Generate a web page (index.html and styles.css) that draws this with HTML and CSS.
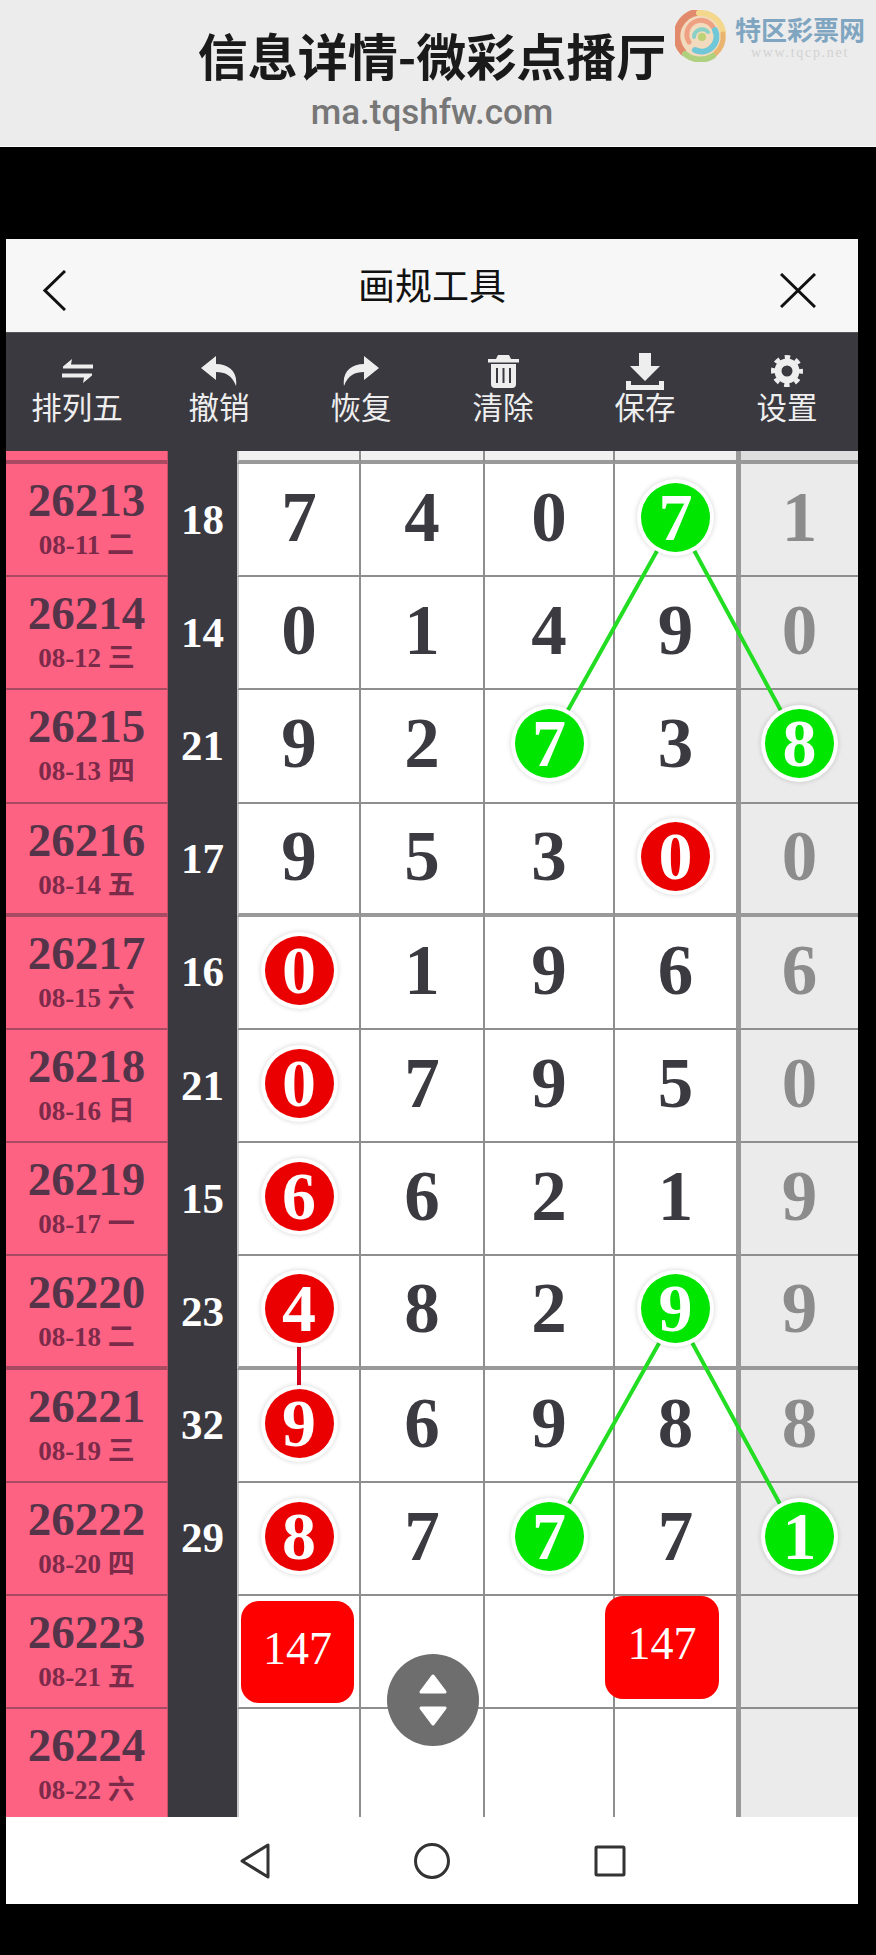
FILE: index.html
```html
<!DOCTYPE html>
<html lang="zh">
<head>
<meta charset="UTF-8">
<meta name="viewport" content="width=device-width, initial-scale=1.0">
<title>信息详情-微彩点播厅</title>
<link rel="stylesheet" href="styles.css">
</head>
<body>

<header class="site-head">
  <h1>信息详情-微彩点播厅</h1>
  <p>ma.tqshfw.com</p>
  <div class="mark">
    <svg class="mark-logo" viewBox="0 0 52 52" width="52" height="52" fill="none" stroke-linecap="round">
      <circle cx="26" cy="26" r="25" fill="#f2d9b8"/>
      <path d="M24 2A24 24 0 0 0 8 42" stroke="#e2805f" stroke-width="7"/>
      <path d="M24 3A23 23 0 0 1 48 22" stroke="#f3d583" stroke-width="6"/>
      <path d="M48 24A23 23 0 0 1 40 44" stroke="#e9ae63" stroke-width="5"/>
      <path d="M10 44A24 24 0 0 0 38 46" stroke="#a9cf74" stroke-width="6"/>
      <path d="M14 32A14 14 0 0 1 38 17" stroke="#f09a78" stroke-width="5"/>
      <path d="M40 20A15 15 0 0 1 20 40" stroke="#62c3d6" stroke-width="6"/>
      <path d="M19 27A8 8 0 0 1 33 22" stroke="#7fcfc4" stroke-width="4"/>
      <circle cx="27" cy="27" r="4" fill="#b9cf6a"/>
    </svg>
    <div class="mark-text">
      <b>特区彩票网</b>
      <span>www.tqcp.net</span>
    </div>
  </div>
</header>

<main class="app">
  <div class="titlebar">
    <svg viewBox="0 0 23 41" width="23" height="41" fill="none" stroke="#111" stroke-width="3"><path d="M22 1L2 20.500L22 40"/></svg>
    <h2>画规工具</h2>
    <svg viewBox="0 0 36 35" width="36" height="35" fill="none" stroke="#111" stroke-width="3"><path d="M1 1L35 34M35 1L1 34"/></svg>
  </div>

  <nav class="toolbar">
    <div class="tool">
      <span class="tool-icon"><svg viewBox="0 0 31 24" width="31" height="24" fill="#eee"><path d="M10 0L1 7.500V9.500H31V5.500H9Z"/><path d="M21 24L30 16.500V14.500H0V18.500H22Z"/></svg></span>
      排列五
    </div>
    <div class="tool">
      <span class="tool-icon"><svg viewBox="0 0 36 30" width="36" height="30" fill="#eee"><path d="M15 0L0 12L15 24V16C24 16 31 19 35 30C37 16 28 8 15 8Z"/></svg></span>
      撤销
    </div>
    <div class="tool">
      <span class="tool-icon"><svg viewBox="0 0 36 30" width="36" height="30" fill="#eee"><path d="M21 0L36 12L21 24V16C12 16 5 19 1 30C-1 16 8 8 21 8Z"/></svg></span>
      恢复
    </div>
    <div class="tool">
      <span class="tool-icon"><svg viewBox="0 0 31 33" width="31" height="33" fill="#eee"><path d="M10 0H21L23 4H31V7.500H0V4H8Z"/><path d="M3 9H28V29Q28 33 24 33H7Q3 33 3 29Z"/><path d="M9 13V28M15.500 13V28M22 13V28" stroke="#3a3940" stroke-width="2"/></svg></span>
      清除
    </div>
    <div class="tool">
      <span class="tool-icon"><svg viewBox="0 0 38 37" width="38" height="37" fill="#eee"><path d="M13 0H25V13H34L19 28L4 13H13Z"/><path d="M0 28H5V32H33V28H38V37H0Z"/></svg></span>
      保存
    </div>
    <div class="tool">
      <span class="tool-icon"><svg viewBox="0 0 32 32" width="32" height="32" fill="none" stroke="#eee"><circle cx="16" cy="16" r="9" stroke-width="7"/><circle cx="16" cy="16" r="14" stroke-width="4" stroke-dasharray="5.500 5.500" stroke-dashoffset="2.750"/></svg></span>
      设置
    </div>
  </nav>

  <section class="board">
    <div class="row head sep">
      <div class="issue"></div><div class="sum"></div>
      <div class="cell"></div><div class="cell"></div><div class="cell"></div><div class="cell"></div><div class="cell last"></div>
    </div>

    <div class="row">
      <div class="issue"><b>26213</b><small>08-11 二</small></div><div class="sum">18</div>
      <div class="cell">7</div><div class="cell">4</div><div class="cell">0</div><div class="cell"><span class="ball green">7</span></div><div class="cell last">1</div>
    </div>
    <div class="row">
      <div class="issue"><b>26214</b><small>08-12 三</small></div><div class="sum">14</div>
      <div class="cell">0</div><div class="cell">1</div><div class="cell">4</div><div class="cell">9</div><div class="cell last">0</div>
    </div>
    <div class="row">
      <div class="issue"><b>26215</b><small>08-13 四</small></div><div class="sum">21</div>
      <div class="cell">9</div><div class="cell">2</div><div class="cell"><span class="ball green">7</span></div><div class="cell">3</div><div class="cell last"><span class="ball green">8</span></div>
    </div>
    <div class="row sep">
      <div class="issue"><b>26216</b><small>08-14 五</small></div><div class="sum">17</div>
      <div class="cell">9</div><div class="cell">5</div><div class="cell">3</div><div class="cell"><span class="ball red">0</span></div><div class="cell last">0</div>
    </div>
    <div class="row">
      <div class="issue"><b>26217</b><small>08-15 六</small></div><div class="sum">16</div>
      <div class="cell"><span class="ball red">0</span></div><div class="cell">1</div><div class="cell">9</div><div class="cell">6</div><div class="cell last">6</div>
    </div>
    <div class="row">
      <div class="issue"><b>26218</b><small>08-16 日</small></div><div class="sum">21</div>
      <div class="cell"><span class="ball red">0</span></div><div class="cell">7</div><div class="cell">9</div><div class="cell">5</div><div class="cell last">0</div>
    </div>
    <div class="row">
      <div class="issue"><b>26219</b><small>08-17 一</small></div><div class="sum">15</div>
      <div class="cell"><span class="ball red">6</span></div><div class="cell">6</div><div class="cell">2</div><div class="cell">1</div><div class="cell last">9</div>
    </div>
    <div class="row sep">
      <div class="issue"><b>26220</b><small>08-18 二</small></div><div class="sum">23</div>
      <div class="cell"><span class="ball red">4</span></div><div class="cell">8</div><div class="cell">2</div><div class="cell"><span class="ball green">9</span></div><div class="cell last">9</div>
    </div>
    <div class="row">
      <div class="issue"><b>26221</b><small>08-19 三</small></div><div class="sum">32</div>
      <div class="cell"><span class="ball red">9</span></div><div class="cell">6</div><div class="cell">9</div><div class="cell">8</div><div class="cell last">8</div>
    </div>
    <div class="row">
      <div class="issue"><b>26222</b><small>08-20 四</small></div><div class="sum">29</div>
      <div class="cell"><span class="ball red">8</span></div><div class="cell">7</div><div class="cell"><span class="ball green">7</span></div><div class="cell">7</div><div class="cell last"><span class="ball green">1</span></div>
    </div>
    <div class="row">
      <div class="issue"><b>26223</b><small>08-21 五</small></div><div class="sum"></div>
      <div class="cell"></div><div class="cell"></div><div class="cell"></div><div class="cell"></div><div class="cell last"></div>
    </div>
    <div class="row end">
      <div class="issue"><b>26224</b><small>08-22 六</small></div><div class="sum"></div>
      <div class="cell"></div><div class="cell"></div><div class="cell"></div><div class="cell"></div><div class="cell last"></div>
    </div>

    <svg class="links" viewBox="0 0 852 1366" width="852" height="1366">
      <path d="M670 66L543 293M670 66L793 293M670 862L543 1088M670 862L793 1088" stroke="#22dd22" stroke-width="4"/>
      <path d="M293 863L293 976" stroke="#d8001c" stroke-width="4"/>
    </svg>

    <div class="tag tag-a">147</div>
    <div class="tag tag-b">147</div>
    <div class="drag">
      <svg viewBox="0 0 28 52" width="28" height="52" fill="#fff" stroke="#fff" stroke-width="3" stroke-linejoin="round"><path d="M14 2L26 18H2Z"/><path d="M14 50L26 34H2Z"/></svg>
    </div>
  </section>

  <footer class="navbar">
    <svg viewBox="0 0 30 36" width="30" height="36" fill="none" stroke="#333" stroke-width="3" stroke-linejoin="round"><path d="M28 2V34L2 18Z"/></svg>
    <svg viewBox="0 0 36 36" width="36" height="36" fill="none" stroke="#333" stroke-width="3"><circle cx="18" cy="18" r="16.500"/></svg>
    <svg viewBox="0 0 32 32" width="32" height="32" fill="none" stroke="#333" stroke-width="3" stroke-linejoin="round"><rect x="2" y="2" width="28" height="28" rx="1"/></svg>
  </footer>
</main>

</body>
</html>
```

FILE: styles.css
```css
* {
  box-sizing: border-box;
}
body {
  margin: 0;
  background: #000;
  height: 1955px;
  overflow: hidden;
  font-family: "Noto Sans CJK SC", sans-serif;
}

/* top caption */
.site-head {
  position: relative;
  height: 147px;
  background: #ececec;
  border-bottom: 1px solid #fafafa;
  text-align: center;
  padding: 20px 12px 0 0;
}
.site-head h1 {
  margin: 0;
  font-size: 50px;
  line-height: 68px;
  font-weight: 700;
  color: #1a1a1a;
}
.site-head p {
  margin: 3px 0 0;
  font-family: Roboto, sans-serif;
  font-weight: 500;
  font-size: 35px;
  line-height: 44px;
  color: #777;
}
.mark {
  position: absolute;
  left: 675px;
  top: 10px;
  display: flex;
  gap: 8px;
}
.mark-logo {
  opacity: .9;
}
.mark-text b {
  display: block;
  margin-top: 3px;
  font-size: 26px;
  line-height: 32px;
  color: #7fa5c0;
}
.mark-text span {
  display: block;
  font-family: "Liberation Serif", serif;
  font-size: 14px;
  line-height: 16px;
  letter-spacing: 1.700px;
  color: #d2d2d2;
}

.app {
  width: 852px;
  margin: 92px 0 0 6px;
}

.titlebar {
  height: 93px;
  background: #f7f7f7;
  display: flex;
  align-items: center;
  justify-content: space-between;
  padding: 0 42px 0 37px;
}
.titlebar svg {
  margin-top: 9px;
}
.titlebar h2 {
  margin: 0 0 4px 18px;
  font-size: 37px;
  line-height: 48px;
  font-weight: 400;
  color: #111;
}

.toolbar {
  height: 119px;
  background: #3a3940;
  display: grid;
  grid-template-columns: repeat(6, 1fr);
  border-top: 1px solid #555;
}
.tool {
  text-align: center;
  color: #eee;
  font-size: 30.500px;
  line-height: 40px;
  font-weight: 400;
}
.tool-icon {
  display: flex;
  height: 36px;
  margin: 20px 0 -3px;
  align-items: center;
  justify-content: center;
}

/* number grid */
.board {
  position: relative;
  height: 1366px;
  overflow: hidden;
}
.row {
  display: grid;
  grid-template-columns: 162px 69px 124px 124px 130px 126px 117px;
  grid-template-rows: 100%;
  height: 113.200px;
}
.row.head {
  height: 13px;
}
.row.end {
  height: 108px;
}
.issue {
  background: #fe6283;
  border-bottom: 2px solid #a84a62;
  border-right: 1px solid #c85069;
  padding-top: 14px;
  text-align: center;
  font-family: "Liberation Serif", "Noto Sans CJK SC", serif;
}
.issue b {
  display: block;
  font-size: 47px;
  line-height: 45px;
  color: #55344a;
}
.issue small {
  display: block;
  font-size: 27px;
  line-height: 45px;
  font-weight: 700;
  color: #7b2a4a;
}
.sum {
  background: #3a3940;
  color: #fff;
  font-family: "Liberation Serif", serif;
  font-weight: 700;
  font-size: 43px;
  padding-bottom: 3px;
  display: flex;
  align-items: center;
  justify-content: center;
}
.cell {
  background: #fff;
  border-right: 2px solid #8e8e8e;
  border-bottom: 2px solid #8e8e8e;
  color: #3a3a40;
  font-family: "Liberation Serif", serif;
  font-weight: 700;
  font-size: 71px;
  padding-bottom: 4px;
  display: flex;
  align-items: center;
  justify-content: center;
}
.cell:nth-child(3) {
  border-left: 2px solid #c8c8cc;
}
.cell:nth-child(6) {
  border-right: 5px solid #999;
}
.cell.last {
  background: #ebebeb;
  color: #8c8c8c;
  border-right: 0;
}
.row.sep .issue {
  border-bottom: 4px solid #a84a62;
}
.row.sep .cell {
  border-bottom: 4px solid #999;
}
.row.end .issue,
.row.end .cell {
  border-bottom: 0;
}
.row.head .issue,
.row.head .sum,
.row.head .cell {
  padding: 0;
}
.row.head .cell {
  background: #f1f1f1;
}
.row.head .cell.last {
  background: #dedede;
}

.ball {
  position: relative;
  z-index: 2;
  width: 69px;
  height: 69px;
  border-radius: 50%;
  color: #fff;
  font-size: 68px;
  line-height: 69px;
  text-align: center;
  box-shadow: 0 0 0 4px #fff, 0 0 4px 5px rgba(0, 0, 0, .12);
}
.ball.green {
  background: #00e600;
}
.ball.red {
  background: #ea0000;
}

/* things drawn over the grid */
.links {
  position: absolute;
  left: 0;
  top: 0;
  z-index: 1;
}
.tag {
  position: absolute;
  z-index: 3;
  background: #f00;
  color: #fff;
  border-radius: 18px;
  font-family: "Liberation Serif", serif;
  font-size: 46px;
  display: flex;
  align-items: center;
  justify-content: center;
}
.tag-a {
  left: 235px;
  top: 1150px;
  width: 113px;
  height: 102px;
  padding-bottom: 8px;
}
.tag-b {
  left: 599px;
  top: 1145px;
  width: 114px;
  height: 103px;
  padding-bottom: 8px;
}
.drag {
  position: absolute;
  z-index: 3;
  left: 381px;
  top: 1203px;
  width: 92px;
  height: 92px;
  border-radius: 50%;
  background: #6e6e6e;
  display: flex;
  align-items: center;
  justify-content: center;
}

.navbar {
  height: 87px;
  background: #fff;
  display: flex;
  align-items: center;
  justify-content: center;
  gap: 144px;
  padding-left: 2px;
}
```
